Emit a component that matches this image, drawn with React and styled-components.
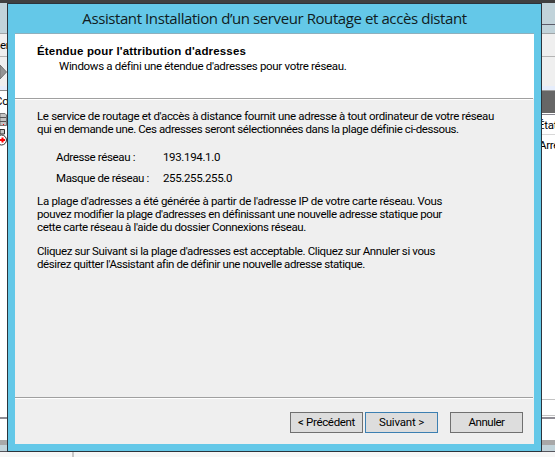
import React from "react";
import styled, { createGlobalStyle } from "styled-components";

const GlobalStyle = createGlobalStyle`
  * { box-sizing: border-box; }
  body { margin: 0; overflow: hidden; background: #f7f7f7; }
`;

const Screen = styled.div`
  width: 555px;
  height: 457px;
  display: grid;
  grid-template-columns: 7px 535px 13px;
  grid-template-rows: 3px 449px 5px;
  font-family: Roboto, "Liberation Sans", sans-serif;
  font-size: 11.5px;
  color: #000;
  overflow: hidden;
`;

const TopEdge = styled.div`
  grid-column: 1 / -1;
  background: #404040;
`;

const Strip = styled.div`
  display: flex;
  flex-direction: column;
  overflow: hidden;
  background: #fff;
`;

const Band = styled.div`
  flex: 0 0 ${(p) => p.$h}px;
  height: ${(p) => p.$h}px;
  background: ${(p) => p.$bg || "#fff"};
  display: flex;
  align-items: center;
  overflow: hidden;
  white-space: nowrap;
`;

const ClippedText = styled.span`
  letter-spacing: -0.3px;
  margin-left: ${(p) => p.$shift || 0}px;
`;

const StripIcon = styled.svg`
  display: block;
  flex: none;
`;

const Dialog = styled.section`
  display: flex;
  flex-direction: column;
  background: #64c8e8;
  border: 1px solid #2b343c;
  padding: 0 7px 7px;
`;

const TitleBar = styled.header`
  height: 29px;
  flex: none;
  display: flex;
  justify-content: center;
  align-items: center;
  font: 15px/29px "Open Sans", sans-serif;
  letter-spacing: -0.41px;
  color: #101c22;
  white-space: nowrap;
`;

const Client = styled.div`
  flex: 1;
  display: flex;
  flex-direction: column;
  width: 519px;
  background: #efefef;
  border-top: 1px solid #8fb0bd;
`;

const Heading = styled.div`
  height: 64px;
  background: #fff;
  padding: 11px 0 0 22px;
`;

const Line = styled.div`
  height: 13px;
  line-height: 13px;
  letter-spacing: ${(p) => p.$ls}px;
  white-space: nowrap;
`;

const HeadingTitle = styled(Line)`
  font-family: "Liberation Sans", sans-serif;
  font-weight: bold;
`;

const HeadingText = styled(Line)`
  margin-top: 2px;
  padding-left: 22px;
`;

const Separator = styled.div`
  height: 2px;
  flex: none;
  width: 518px;
  background: linear-gradient(#a0a0a0 50%, #fff 50%);
`;

const Body = styled.main`
  height: 297px;
  padding: 10px 0 0 22px;
`;

const Fields = styled.dl`
  display: grid;
  grid-template-columns: 107px auto;
  row-gap: 8px;
  margin: 15px 0 10px 19px;
`;

const Field = styled(Line)`
  margin: 0;
`;

const Paragraph = styled.div`
  margin-bottom: 11px;
`;

const Footer = styled.footer`
  display: flex;
  justify-content: flex-end;
  gap: 2px;
  padding: 13px 11px 0 0;
`;

const Button = styled.button`
  width: 73px;
  height: 21px;
  padding: 0;
  border: 1px solid ${(p) => (p.$primary ? "#3c7fb1" : "#707070")};
  background: #dddddd;
  color: #000;
  font: inherit;
  line-height: 19px;
  letter-spacing: ${(p) => p.$ls}px;
  margin-left: ${(p) => (p.$apart ? 10 : 0)}px;
`;

const BottomEdge = styled.div`
  grid-column: 1 / -1;
  display: grid;
  grid-template-columns: 74px 1fr;
  background: #f7f7f7;
`;

const Pane = styled.div`
  border-right: ${(p) => (p.$divider ? "2px solid #c8c8c8" : "0")};
`;

export default function App() {
  return (
    <>
      <GlobalStyle />
      <Screen>
        <TopEdge />
        <Strip>
          <Band $h={30} $bg="#c1d3da" />
          <Band $h={1} $bg="#a0a6a8" />
          <Band $h={22} $bg="#efefef"><ClippedText>er</ClippedText></Band>
          <Band $h={1} $bg="#b4b4b4" />
          <Band $h={29} $bg="#efefef">
            <StripIcon width="7" height="16" viewBox="0 0 7 16">
              <path d="M0 1L6.5 8L0 15Z" fill="#949494" stroke="#707070" />
            </StripIcon>
          </Band>
          <Band $h={4} $bg="#e6edfb" />
          <Band $h={1} $bg="#8d8d8d" />
          <Band $h={20}><ClippedText $shift={-5}>Co</ClippedText></Band>
          <Band $h={38}>
            <StripIcon width="7" height="38" viewBox="0 0 7 38">
              <path d="M0 2.5H5L6.5 4V14.5H0Z" fill="#c4c4c4" stroke="#777" />
              <path d="M0 6.5H6M0 10.5H6" stroke="#555" />
              <path d="M3 13.5H4" stroke="#f00" />
              <path d="M0 18.5H4.5V23H0Z" fill="#c4c4c4" stroke="#333" />
              <circle cx="1.5" cy="29" r="5" fill="#fff" stroke="#333" />
              <path d="M0 29H5M2.5 26.5V31.5" stroke="#f00" strokeWidth="2" />
            </StripIcon>
          </Band>
          <Band $h={268} />
          <Band $h={2} $bg="#8e8c94" />
          <Band $h={21} />
          <Band $h={5} $bg="#a8a8a8" />
          <Band $h={6} $bg="#c1d3da" />
          <Band $h={1} $bg="#55555c" />
        </Strip>

        <Dialog>
          <TitleBar>Assistant Installation d’un serveur Routage et accès distant</TitleBar>
          <Client>
            <Heading>
              <HeadingTitle $ls={0.165}>Étendue pour l'attribution d'adresses</HeadingTitle>
              <HeadingText $ls={-0.317}>Windows a défini une étendue d'adresses pour votre réseau.</HeadingText>
            </Heading>
            <Separator />
            <Body>
              <Line $ls={-0.334}>Le service de routage et d'accès à distance fournit une adresse à tout ordinateur de votre réseau</Line>
              <Line $ls={-0.4}>qui en demande une. Ces adresses seront sélectionnées dans la plage définie ci-dessous.</Line>
              <Fields>
                <Field as="dt" $ls={-0.36}>Adresse réseau :</Field>
                <Field as="dd" $ls={-0.34}>193.194.1.0</Field>
                <Field as="dt" $ls={-0.37}>Masque de réseau :</Field>
                <Field as="dd" $ls={-0.36}>255.255.255.0</Field>
              </Fields>
              <Paragraph>
                <Line $ls={-0.3}>La plage d'adresses a été générée à partir de l'adresse IP de votre carte réseau. Vous</Line>
                <Line $ls={-0.396}>pouvez modifier la plage d'adresses en définissant une nouvelle adresse statique pour</Line>
                <Line $ls={-0.37}>cette carte réseau à l'aide du dossier Connexions réseau.</Line>
              </Paragraph>
              <Paragraph>
                <Line $ls={-0.38}>Cliquez sur Suivant si la plage d'adresses est acceptable. Cliquez sur Annuler si vous</Line>
                <Line $ls={-0.42}>désirez quitter l'Assistant afin de définir une nouvelle adresse statique.</Line>
              </Paragraph>
            </Body>
            <Separator />
            <Footer>
              <Button $ls={-0.33}>&lt; Précédent</Button>
              <Button $ls={-0.19} $primary>Suivant &gt;</Button>
              <Button $ls={-0.47} $apart>Annuler</Button>
            </Footer>
          </Client>
        </Dialog>

        <Strip>
          <Band $h={21} $bg="#c1d3da" />
          <Band $h={1} $bg="#5c5c6a" />
          <Band $h={8} $bg="#c1d3da" />
          <Band $h={1} $bg="#a0a6a8" />
          <Band $h={22} $bg="#efefef" />
          <Band $h={1} $bg="#b4b4b4" />
          <Band $h={29} $bg="#efefef" />
          <Band $h={4} $bg="#e6edfb" />
          <Band $h={1} $bg="#a0a0a0" />
          <Band $h={22} $bg="#666666" />
          <Band $h={1} $bg="#fff" />
          <Band $h={1} $bg="#85858f" />
          <Band $h={1} $bg="#fff" />
          <Band $h={18}><ClippedText $shift={-4}>État</ClippedText></Band>
          <Band $h={1} $bg="#d8d8d8" />
          <Band $h={20}><ClippedText $shift={-3}>Arrêté</ClippedText></Band>
          <Band $h={244} />
          <Band $h={1} $bg="#c4c4c4" />
          <Band $h={15} />
          <Band $h={1} $bg="#c4c4c4" />
          <Band $h={1} />
          <Band $h={2} $bg="#8e8c94" />
          <Band $h={21} />
          <Band $h={5} $bg="#a8a8a8" />
          <Band $h={6} $bg="#c1d3da" />
          <Band $h={1} $bg="#55555c" />
        </Strip>

        <BottomEdge>
          <Pane $divider />
          <Pane />
        </BottomEdge>
      </Screen>
    </>
  );
}
